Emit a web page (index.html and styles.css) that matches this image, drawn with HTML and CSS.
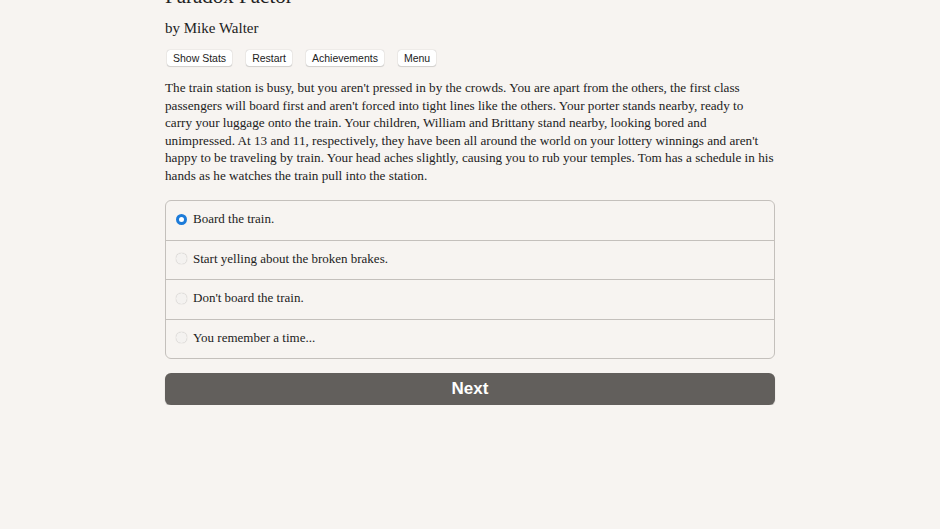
FILE: index.html
```html
<!DOCTYPE html>
<html>
<head>
<meta charset="utf-8">
<link rel="stylesheet" href="styles.css">
</head>
<body>
<div class="container">
  <h1 class="title">Paradox Factor</h1>
  <h2 class="author">by Mike Walter</h2>
  <div class="buttons">
    <button class="spacedLink">Show Stats</button>
    <button class="spacedLink">Restart</button>
    <button class="spacedLink">Achievements</button>
    <button class="spacedLink">Menu</button>
  </div>
  <p class="story">The train station is busy, but you aren't pressed in by the crowds. You are apart from the others, the first class<br>passengers will board first and aren't forced into tight lines like the others. Your porter stands nearby, ready to<br>carry your luggage onto the train. Your children, William and Brittany stand nearby, looking bored and<br>unimpressed. At 13 and 11, respectively, they have been all around the world on your lottery winnings and aren't<br>happy to be traveling by train. Your head aches slightly, causing you to rub your temples. Tom has a schedule in his<br>hands as he watches the train pull into the station.</p>
  <form class="choices">
    <label class="choice"><span class="radio checked"></span><span>Board the train.</span></label>
    <label class="choice"><span class="radio"></span><span>Start yelling about the broken brakes.</span></label>
    <label class="choice"><span class="radio"></span><span>Don't board the train.</span></label>
    <label class="choice"><span class="radio"></span><span>You remember a time...</span></label>
  </form>
  <button class="next">Next</button>
</div>
</body>
</html>
```

FILE: styles.css
```css
html, body {
  margin: 0;
  padding: 0;
  background: #f7f4f1;
}
body {
  font-family: "Liberation Serif", "DejaVu Serif", serif;
  color: #222;
}
.container {
  width: 610px;
  margin: -17px auto 0;
}
.title {
  font-size: 21px;
  font-weight: normal;
  margin: 0;
  line-height: 26px;
}
.author {
  font-size: 15px;
  font-weight: normal;
  margin: 9px 0 0;
  line-height: 20px;
}
.buttons {
  display: flex;
  gap: 14px;
  margin: 12px 0 0 2px;
}
.spacedLink {
  font-family: "Liberation Sans", Arial, sans-serif;
  font-size: 10.5px;
  color: #222;
  background: #fff;
  border: none;
  border-radius: 3px;
  box-shadow: 0 0 1px rgba(0,0,0,0.35), 0 1px 1px rgba(0,0,0,0.12);
  height: 16px;
  padding: 0 6px;
  line-height: 16px;
}
.story {
  font-size: 13.2px;
  line-height: 17.5px;
  margin: 13px 0 0;
  white-space: nowrap;
}
.choices {
  margin: 16px 0 0;
  border: 1px solid #c4c0bc;
  border-radius: 6px;
  display: flex;
  flex-direction: column;
}
.choice {
  display: flex;
  align-items: center;
  height: 38.5px;
  padding-left: 10px;
  padding-bottom: 2px;
  box-sizing: border-box;
  gap: 6px;
  font-size: 13px;
  border-top: 1px solid #c4c0bc;
}
.choice:first-child {
  border-top: none;
  height: 38.5px;
}
.choice + .choice {
  height: 39.5px;
}
.radio {
  width: 11px;
  height: 11px;
  border-radius: 50%;
  background: #f4f2f0;
  box-shadow: 0 0 1px rgba(0,0,0,0.35);
}
.radio.checked {
  width: 5px;
  height: 5px;
  background: #fff;
  border: 3px solid #1c7bd9;
  box-shadow: none;
}
.next {
  display: block;
  width: 100%;
  margin-top: 14px;
  height: 32px;
  border: none;
  border-radius: 6px;
  background: #625f5c;
  color: #fff;
  font-family: "Liberation Sans", Arial, sans-serif;
  font-weight: bold;
  font-size: 17px;
  box-shadow: 0 1px 1px rgba(0,0,0,0.3);
}
```
